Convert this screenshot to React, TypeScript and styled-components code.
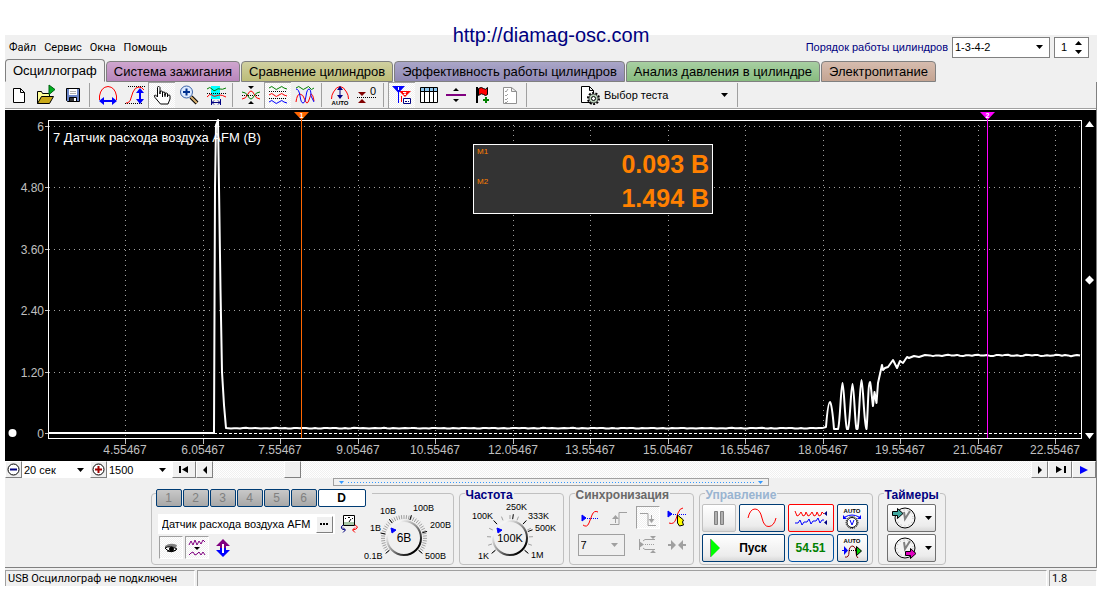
import React from "react";
import styled, { createGlobalStyle, css } from "styled-components";

const Global = createGlobalStyle`
  * { box-sizing: border-box; }
  body { margin: 0; background: #fff; font: 11px/14px "Liberation Sans", Arial, sans-serif; color: #000; }
  button, input, select { font: inherit; color: inherit; margin: 0; border-radius: 0; }
  svg { display: block; flex: none; }
`;

const dither = css`
  background: repeating-conic-gradient(#ffffff 0 25%, #f0f0f0 0 50%) 0 0 / 2px 2px;
`;

const Page = styled.div`
  padding: 0 12px 5px 5px;
`;
const Banner = styled.header`
  height: 35px;
  display: flex;
  justify-content: center;
  align-items: flex-start;
  padding-top: 24px;
`;
const SiteLink = styled.a`
  position: relative;
  z-index: 1;
  font-size: 20px;
  line-height: 23px;
  color: #000080;
  text-decoration: none;
`;
const Window = styled.main`
  background: #f0f0f0;
`;
const MenuBar = styled.nav`
  height: 24px;
  display: flex;
  align-items: center;
  justify-content: space-between;
  padding: 0 8px 0 4px;
`;
const MenuList = styled.div`
  display: flex;
  gap: 8px;
  padding-top: 2px;
`;
const MenuItem = styled.button`
  border: 0;
  background: none;
  padding: 0;
  font: 11px/14px Roboto, sans-serif;
`;
const OrderBar = styled.div`
  display: flex;
  align-items: center;
  gap: 4px;
`;
const OrderLabel = styled.label`
  color: #000080;
`;
const Picker = styled.span<{ $w: number; $h: number; $line?: string; $bg?: string }>`
  display: inline-grid;
  align-items: center;
  width: ${(p) => p.$w}px;
  height: ${(p) => p.$h}px;
  border: ${(p) => (p.$line ? `1px solid ${p.$line}` : "0")};
  background: ${(p) => p.$bg || "#fff"};
  & > select, & > svg { grid-area: 1 / 1; }
  & > select {
    appearance: none;
    border: 0;
    background: none;
    padding: 0 0 0 2px;
    width: 100%;
    color: #000;
    outline: 0;
  }
  & > svg { justify-self: end; margin-right: 6px; pointer-events: none; }
`;
const SpinBox = styled.span`
  display: flex;
  align-items: center;
  width: 35px;
  height: 21px;
  border: 1px solid #808080;
  background: #fff;
  & > input { width: 20px; border: 0; padding: 0 0 0 6px; background: none; outline: 0; }
`;

const TabStrip = styled.div`
  display: flex;
  align-items: flex-end;
  height: 23px;
  gap: 1px;
`;
const Tab = styled.button<{ $tint?: string }>`
  height: ${(p) => (p.$tint ? 21 : 23)}px;
  padding: 0 7px;
  font-size: 13px;
  line-height: 15px;
  border: 1px solid #808080;
  border-bottom-color: ${(p) => (p.$tint ? "#808080" : "#f0f0f0")};
  border-radius: 4px 4px 0 0;
  background: ${(p) => p.$tint || "#f0f0f0"};
  white-space: nowrap;
`;
const Frame = styled.div`
  border: solid #808080;
  border-width: 0 1px 1px 0;
`;
const Toolbar = styled.div`
  display: flex;
  align-items: center;
  height: 27px;
  border-bottom: 1px solid #a0a0a0;
`;
const Tool = styled.button<{ $down?: boolean }>`
  width: 27px;
  height: 26px;
  padding: 0;
  display: grid;
  place-items: center;
  border: 0;
  background: none;
  ${(p) =>
    p.$down &&
    css`
      ${dither};
      box-shadow: inset 1px 1px #a0a0a0;
    `}
`;
const Divider = styled.span`
  width: 8px;
  height: 24px;
  display: block;
  border-left: 3px solid transparent;
  border-right: 4px solid transparent;
  background: #a0a0a0;
  background-clip: padding-box;
`;
const TestPicker = styled.div`
  display: flex;
  align-items: center;
  margin-left: 47px;
`;

const Scope = styled.section`
  position: relative;
  background: #000;
  border-top: 1px solid #fff;
`;
const Plot = styled.svg`
  width: 100%;
  height: auto;
`;
const Readout = styled.div`
  position: absolute;
  left: 42.9%;
  top: 34px;
  width: 240px;
  height: 70px;
  border: 1px solid #fff;
  background: #333;
  color: #ff8000;
  padding: 2px 3px;
  display: flex;
  justify-content: space-between;
`;
const ReadNames = styled.div`
  display: grid;
  grid-auto-rows: 30px;
  font-size: 8px;
  line-height: 10px;
`;
const ReadValues = styled.div`
  font-size: 25px;
  line-height: 34px;
  font-weight: bold;
  text-align: right;
`;

const TimeBar = styled.div`
  display: flex;
  height: 17px;
  background: #f0f0f0;
`;
const Key = styled.button<{ $w: number }>`
  width: ${(p) => p.$w}px;
  height: 17px;
  padding: 0;
  display: grid;
  place-items: center;
  background: #f0f0f0;
  border: 1px solid;
  border-color: #fff #808080 #808080 #fff;
`;
const Track = styled.div`
  flex: 1;
  padding-left: 71px;
  ${dither};
`;
const Splitter = styled.div`
  width: 436px;
  height: 8px;
  margin: 0 auto;
  border: 1px solid #a0a0a0;
  display: flex;
  align-items: center;
  justify-content: space-between;
  padding: 0 5px;
`;
const Dots = styled.span`
  flex: 1;
  margin: 0 4px;
  height: 1px;
  background: repeating-linear-gradient(90deg, #3399ff 0 1px, transparent 1px 3px);
`;
const Panel = styled.div`
  display: flex;
  justify-content: center;
  gap: 5px;
  padding: 7px 5px 2px 0;
`;
const Group = styled.section<{ $w: number }>`
  width: ${(p) => p.$w}px;
  height: 72px;
  border: 1px solid #c0c0c0;
  border-radius: 4px;
`;
const GroupTitle = styled.h2<{ $ink: string }>`
  margin: -6px 0 0 5px;
  padding: 0 1px;
  width: max-content;
  font-size: 12px;
  line-height: 14px;
  background: #f0f0f0;
  color: ${(p) => p.$ink};
`;
const ChannelGroup = styled(Group)`
  display: flex;
  justify-content: space-between;
`;
const ChannelSide = styled.div`
  width: 212px;
  padding-left: 4px;
`;
const Channels = styled.div`
  display: flex;
  gap: 1px;
  width: 216px;
  margin-top: -5px;
  padding-right: 6px;
  background: #f0f0f0;
`;
const Channel = styled.button<{ $on?: boolean }>`
  width: ${(p) => (p.$on ? 48 : 26)}px;
  height: 18px;
  padding: 0;
  border: 1px solid #003c74;
  border-radius: 2px;
  font-size: 12px;
  font-weight: ${(p) => (p.$on ? "bold" : "normal")};
  color: ${(p) => (p.$on ? "#000" : "#808080")};
  background: ${(p) => (p.$on ? "#fff" : "linear-gradient(#c8c8c8, #a8a8a8)")};
`;
const SensorRow = styled.div`
  display: flex;
  align-items: center;
  gap: 5px;
  margin: 7px 0 2px 2px;
`;
const SensorBox = styled.div`
  display: flex;
  align-items: center;
  width: 177px;
  height: 20px;
  background: #fff;
  & > input { width: 158px; padding: 0 0 0 4px; border: 0; background: none; outline: 0; }
`;
const ViewRow = styled.div`
  display: flex;
  gap: 2px;
  margin-left: 3px;
`;
const Toggle = styled.button<{ $down?: boolean }>`
  width: 24px;
  height: 23px;
  padding: 0;
  display: grid;
  place-items: center;
  border: 0;
  background: none;
  ${(p) =>
    p.$down &&
    css`
      ${dither};
      border: 1px solid;
      border-color: #a0a0a0 #fff #fff #a0a0a0;
    `}
`;
const SyncGrid = styled.div`
  display: grid;
  grid-template-columns: repeat(4, 24px);
  column-gap: 5px;
  row-gap: 4px;
  align-items: center;
  padding: 4px 0 0 8px;
`;
const Wide = styled.div`
  grid-column: span 2;
  display: flex;
`;
const RunGrid = styled.div`
  display: grid;
  grid-template-columns: 34px 46px 46px 31px;
  gap: 2px 3px;
  padding: 2px 0 0 2px;
`;
const Push = styled.button<{ $line?: string; $span?: number }>`
  height: 28px;
  padding: 0;
  grid-column: span ${(p) => p.$span || 1};
  display: flex;
  align-items: center;
  justify-content: center;
  border: 1px solid ${(p) => p.$line || "#003c74"};
  border-radius: 2px;
  background: linear-gradient(#ffffff, #ececec 80%, #d8d8d8);
`;
const PushTimer = styled(Push)`
  gap: 8px;
`;
const StartText = styled.strong`
  flex: 1;
  font-size: 12px;
`;
const RateBox = styled.output`
  height: 28px;
  display: grid;
  place-items: center;
  border: 1px solid #0050a0;
  border-radius: 4px;
  font-size: 12px;
  font-weight: bold;
  color: #008000;
`;
const TimerStack = styled.div`
  display: grid;
  gap: 2px;
  padding: 2px 9px 0 8px;
`;
const DialSlot = styled.div<{ $titled?: boolean }>`
  padding-top: ${(p) => (p.$titled ? 0 : 5)}px;
  margin-top: ${(p) => (p.$titled ? -3 : 0)}px;
`;
const StatusBar = styled.footer`
  display: flex;
  gap: 2px;
  height: 18px;
  padding-top: 2px;
  background: #f0f0f0;
`;
const StatusCell = styled.div<{ $w?: number }>`
  ${(p) => (p.$w ? `width: ${p.$w}px;` : "flex: 1;")}
  border: solid #a0a0a0;
  border-width: 1px 0 0 1px;
  border-right: 1px solid #fff;
  padding: 0 2px;
  font: 11px/15px Roboto, sans-serif;
  white-space: nowrap;
`;

const Caret = ({ c = "#000" }: { c?: string }) => (
  <svg width="7" height="4" aria-hidden="true"><path d="M0 0h7L3.500 4z" fill={c} /></svg>
);

type IconProps = { children: React.ReactNode; w?: number; h?: number };
const Icon = ({ children, w = 22, h = 22 }: IconProps) => (
  <svg width={w} height={h} viewBox={`0 0 ${w} ${h}`} fill="none" stroke="#000" strokeWidth="1" aria-hidden="true">
    {children}
  </svg>
);

const icons = {
  file: <Icon><path d="M5.500 4.500h7l4 4v10h-11zM12.500 4.500v4h4" fill="#fff" /></Icon>,
  open: (
    <Icon>
      <path d="M2.500 19.500v-12h4l1 2h7v3" fill="#ffff99" />
      <path d="M2.500 19.500l4-7h12l-4 7z" fill="#c8a818" />
      <path d="M14 1l6 4.500-6 5z" fill="#00b020" stroke="#006010" />
    </Icon>
  ),
  save: (
    <Icon>
      <path d="M4.500 4.500h13v13h-12l-1-1z" fill="#6b86c8" />
      <path d="M7 5h8v6H7z" fill="#fff" stroke="none" />
      <path d="M7.500 13.500h7v4h-7z" fill="#333" />
      <path d="M12 14h2v3h-2z" fill="#fff" stroke="none" />
      <path d="M8 7.500h6M8 9.500h6" stroke="#b0b0b0" />
    </Icon>
  ),
  arch: (
    <Icon>
      <path d="M2.500 16v-4Q4 3 11 2.500 18 3 19.500 12v4" stroke="#f00" />
      <path d="M4 17h14" stroke="#00f" strokeWidth="2" />
      <path d="M2 17l5-4v8zM20 17l-5-4v8z" fill="#00f" stroke="none" />
    </Icon>
  ),
  slope: (
    <Icon>
      <path d="M4 2.500h17M1 19.500h18" strokeDasharray="1 1" />
      <path d="M2 19q4 0 5-5l2-6q2-5 6-5 3 0 5 3" stroke="#f00" />
      <path d="M16 6v12" stroke="#00f" strokeWidth="2" />
      <path d="M16 4l4 5h-8zM16 20l4-5h-8z" fill="#00f" stroke="none" />
    </Icon>
  ),
  hand: (
    <Icon>
      <path d="M6.500 13V3.500q0-1 1-1t1.500 1V10V7.500q1.500-1 2.500 0v3-2q1.500-1 2.500 0v3-2q1.500-1 2.500 0v2q2-1 2.500 0V15l-2 5H9.500L4 13.500Q2.500 11 4.500 11z" fill="#fff" />
      <path d="M11.500 10v3M14 10v3M16.500 11v2" />
    </Icon>
  ),
  zoom: (
    <Icon>
      <path d="M13 13l6 6" stroke="#000" strokeWidth="4" />
      <path d="M13 13l6 6" stroke="#d8b070" strokeWidth="2" />
      <circle cx="8.500" cy="8" r="6" fill="#dceaff" stroke="#3a62a8" />
      <path d="M5 8h7M8.500 4.500v7" stroke="#003090" strokeWidth="2" />
    </Icon>
  ),
  band: (
    <Icon>
      <path d="M6 2h9v13H6z" fill="#00ffff" stroke="none" />
      <path d="M2 5q3-3 5 0t4 1 4-1 6-1" stroke="#008000" />
      <path d="M2 13q3-4 5-2t4 1 4-1 6 2" stroke="#f00" />
      <path d="M2 9.500h19" strokeDasharray="1 1" />
      <path d="M6.500 15v6M15.500 15v6M7 18.500h8M9 16.500l-2 2 2 2M13 16.500l2 2-2 2" stroke="#000080" />
    </Icon>
  ),
  mirror: (
    <Icon>
      <path d="M2 11.500h18" strokeDasharray="1 1" />
      <path d="M2 15q4 0 6-5 3-6 6 0 2 5 6 5" stroke="#f00" />
      <path d="M2 8q4 0 6 4 3 6 6 0 2-4 6-4" stroke="#008000" />
      <path d="M8 2h6l-3 3zM8 20h6l-3-3z" fill="#000" stroke="none" />
    </Icon>
  ),
  waves: (
    <Icon>
      <path d="M2 4q3-3 5 0t5 0 5 0l3 1" stroke="#008000" />
      <path d="M2 7.500h18M2 14.500h18" strokeDasharray="1 1" />
      <path d="M2 11q3-3 5 0t5 0 5 0l3 1" stroke="#f00" />
      <path d="M2 18q3-3 5 0t5 0 5 0l3 1" stroke="#00f" />
    </Icon>
  ),
  overlay: (
    <Icon>
      <path d="M2 4q3-3 5 0t5 0 4 0 4 0" stroke="#008000" />
      <path d="M2 18q1-8 4-8t5 6 4 0 2-6q2 0 3 7" stroke="#f00" />
      <path d="M2 5q3 0 4 7 1 7 3 7t3-7q1-7 3-7t2 7l3 6" stroke="#00f" />
    </Icon>
  ),
  autoY: (
    <Icon>
      <path d="M2.500 15q0-4 2-7 3-5.500 6.500-5.500T17.500 8q2 3 2 7" stroke="#f00" />
      <path d="M11 4v9" stroke="#000080" />
      <path d="M11 2l3 4H8zM11 15l3-4H8z" fill="#000080" stroke="none" />
      <text x="11" y="21" fontSize="6" fontWeight="bold" textAnchor="middle" fill="#000" stroke="none">AUTO</text>
    </Icon>
  ),
  zero: (
    <Icon>
      <path d="M1 13.500h19" strokeDasharray="1 1" />
      <path d="M2 8h8l-4 4zM2 19h8l-4-4z" fill="#800000" stroke="none" />
      <text x="14" y="11" fontSize="11" fill="#000" stroke="none">0</text>
    </Icon>
  ),
  markers: (
    <Icon>
      <path d="M8 7h12l-6 6z" fill="#f00" stroke="none" />
      <path d="M1 2h13L7.500 9z" fill="#00f" stroke="none" />
      <path d="M7.500 8v11" stroke="#00f" /><path d="M10.500 12v6" stroke="#f00" />
      <path d="M7.500 3v3M12 8.500h3l-2 2h2" stroke="#fff" />
      <path d="M12.500 14.500h7v5h-7z" fill="#fff" stroke="#000080" />
      <path d="M14 17.500h2M17 17.500h1" stroke="#000080" />
    </Icon>
  ),
  table: (
    <Icon>
      <path d="M2.500 3.500h17v15h-17z" fill="#fff" />
      <path d="M3 4h16v3H3z" fill="#90c8f0" stroke="none" />
      <path d="M2.500 7.500h17M6.500 4v14M11.500 4v14M15.500 4v14" />
    </Icon>
  ),
  split: (
    <Icon>
      <path d="M1 11h20" stroke="#800080" strokeWidth="2" />
      <path d="M8 7h6l-3-3zM8 15h6l-3 3z" fill="#000" stroke="none" />
    </Icon>
  ),
  flag: (
    <Icon>
      <path d="M5 3v16" strokeWidth="2" />
      <path d="M6.500 4.500q3-2 5 0t4-1v7q-2 2-4 0t-5 1z" fill="#f00" />
      <path d="M11 16h6M14 13v6" stroke="#008000" strokeWidth="2" />
    </Icon>
  ),
  checklist: (
    <Icon>
      <path d="M4.500 3.500h8l5 4v12h-13zM12.500 3.500v4h5" fill="#fff" stroke="#909090" />
      <path d="M6 7l1 1 2-3M6 11l1 1 2-2M6 15l1 1 2-2M6 18l1 1 2-2" stroke="#a0a0a0" />
    </Icon>
  ),
};

const FirstKey = () => <svg width="11" height="7"><path d="M0 0h2v7H0zM9 0v7L3 3.500z" /></svg>;
const LastKey = () => <svg width="11" height="7"><path d="M9 0h2v7H9zM1 0v7l6-3.500z" /></svg>;
const Arrow = ({ left, c = "#000", big }: { left?: boolean; c?: string; big?: boolean }) => (
  <svg width={big ? 8 : 4} height="8" viewBox="0 0 8 8" preserveAspectRatio="none">
    <path d={left ? "M8 0v8L0 4z" : "M0 0v8l8-4z"} fill={c} />
  </svg>
);
const RoundSign = ({ plus }: { plus?: boolean }) => (
  <svg width="13" height="13" fill="none" stroke={plus ? "#a00000" : "#000080"}>
    <circle cx="6.500" cy="6.500" r="5.500" stroke="#000" fill="#fff" />
    <path d={plus ? "M3 6.500h7M6.500 3v7" : "M3 6.500h7"} strokeWidth="2" />
  </svg>
);
const GripMark = () => <svg width="5" height="3"><path d="M0 0h5L2.500 3z" fill="#39f" /></svg>;

const gridX = [125, 203, 280, 358, 435, 513, 590, 668, 745, 823, 900, 978, 1055];
const gridY: [number, string][] = [[126, "6"], [187, "4.80"], [249, "3.60"], [310, "2.40"], [372, "1.20"], [433, "0"]];
const ripple = (from: number, to: number, y: number, amp: number) => {
  let d = "";
  for (let x = from, i = 0; x <= to; x += 3, i++) {
    d += `L${x} ${(y + (Math.sin(i * 1.9) * 0.6 + Math.sin(i * 0.7) * 0.4) * amp).toFixed(1)}`;
  }
  return d;
};
const trace =
  "M48 433H214L215 187L216 125L218 120L219 187L220.500 290L222 372L224 405L226 428" +
  ripple(228, 824, 428.2, 0.4) +
  "L826 427Q828 402 830 402Q832 404 834 429L838 429C840 425 841 383 842.500 383C844 383 845 425 847 429L848 429" +
  "C850 425 851 384 852.500 384C854 384 855 425 856.500 429L857.500 429C859 425 860 380 861.500 380C863 380 864 425 866.500 429" +
  "C868 415 868 382 870 382C871 384 872 400 873 406L874.500 392L876.500 403L878 383L880 374L882 365L883 370L885 368L888 367L893 360L897 368L900 361L903 363L907 357L909 358L914 356L919 357L925 355" +
  ripple(930, 1080, 355.4, 0.8);

function ScopePlot() {
  return (
    <Plot viewBox="5 110 1091 351" role="img" aria-label="Датчик расхода воздуха">
      <g fill="none" shapeRendering="crispEdges">
        {gridX.map((x) => (
          <g key={x}>
            <path d={`M${x + 0.5} 125V438`} stroke="#a0a0a0" strokeDasharray="1 4" />
            <path d={`M${x + 0.5} 439v5`} stroke="#c0c0c0" />
          </g>
        ))}
        {gridY.map(([y]) => (
          <g key={y}>
            <path d={`M49 ${y + 0.5}H1081`} stroke={y === 433 ? "#fff" : "#a0a0a0"} strokeDasharray={y === 433 ? "3 2" : "1 4"} />
            <path d={`M45 ${y + 0.5}h4`} stroke="#c0c0c0" />
          </g>
        ))}
        <path d="M48.500 120.500H1081.500V438.500H48.500z" stroke="#fff" />
      </g>
      <g fill="#c0c0c0" fontSize="12">
        {gridY.map(([y, t]) => <text key={t} x="44" y={y + 5} textAnchor="end">{t}</text>)}
        {gridX.map((x, i) => <text key={x} x={x} y="454" textAnchor="middle">{(4.55467 + i * 1.5).toFixed(5)}</text>)}
      </g>
      <text x="53" y="142" fontSize="13" fill="#fff">7 Датчик расхода воздуха AFM (В)</text>
      <path d={trace} fill="none" stroke="#fff" strokeWidth="2" strokeLinejoin="round" />
      <g fill="none" shapeRendering="crispEdges">
        <path d="M301.500 118V438" stroke="#ff6600" />
        <path d="M987.500 118V438" stroke="#ff00ff" />
      </g>
      <path d="M294 112h15l-7.500 8z" fill="#ff6600" />
      <path d="M980 112h15l-7.500 8z" fill="#ff00ff" />
      <g fill="#fff" fontSize="7" fontWeight="bold" textAnchor="middle">
        <text x="301.500" y="118">1</text>
        <text x="987.500" y="118">2</text>
      </g>
      <path d="M1085 127h9l-4.500-6zM1085 433h9l-4.500 6zM1085 280l4.500-4.500L1094 280l-4.500 4.500z" fill="#fff" />
      <circle cx="12.500" cy="433" r="4" fill="#fff" />
    </Plot>
  );
}

type DialProps = {
  w: number; cx: number; value: string; size: number; ticks: number; label: string;
  marks: { t: string; x: number; y: number; a: number }[];
};
function Dial({ w, cx, value, size, ticks, marks, label }: DialProps) {
  const cy = 39;
  const ray = (deg: number, r1: number, r2: number) => {
    const r = (deg * Math.PI) / 180;
    return `M${cx + Math.sin(r) * r1} ${cy - Math.cos(r) * r1}L${cx + Math.sin(r) * r2} ${cy - Math.cos(r) * r2}`;
  };
  const minor = Array.from({ length: ticks + 1 }, (_, i) => ray(-130 + (260 / ticks) * i, 19, 23)).join("");
  return (
    <svg width={w} height="64" role="img" aria-label={label}>
      <defs>
        <linearGradient id={`rim${ticks}`} x1="0" y1="0" x2="1" y2="1">
          <stop offset="0.2" stopColor="#f4f4f4" />
          <stop offset="0.5" stopColor="#909090" />
          <stop offset="0.85" stopColor="#000" />
        </linearGradient>
      </defs>
      <path d={minor} stroke="#a0a0a0" />
      <path d={marks.map((m) => ray(m.a, 19, 24)).join("")} stroke="#000" />
      <circle cx={cx} cy={cy} r="17" fill="#f0f0f0" stroke={`url(#rim${ticks})`} strokeWidth="2" />
      <path d={`M${cx - 13} ${cy - 10}l5 2-4 3z`} fill="#00f" stroke="#00f" />
      <text x={cx} y={cy + 4} fontSize={size} textAnchor="middle">{value}</text>
      <g fontSize="9">{marks.map((m) => <text key={m.t} x={m.x} y={m.y}>{m.t}</text>)}</g>
    </svg>
  );
}

const Clock = ({ out }: { out?: boolean }) => (
  <Icon w={26} h={24}>
    <circle cx="14" cy="12" r="10" fill="#f4f4f4" />
    <circle cx="14" cy="12" r="8" stroke="#b0b0b0" strokeDasharray="1 3" />
    <path d="M13 6l1 7 5-8" stroke="#808080" strokeWidth="2" />
    {out ? <path d="M14.500 15.500h5v-3l5.500 5-5.500 5v-3h-5z" fill="#e000c0" /> : <path d="M1.500 5.500h5v-3l5.500 5-5.500 5v-3h-5z" fill="#40a8a0" />}
  </Icon>
);

const tabs: [string, string?][] = [
  ["Осциллограф"],
  ["Система зажигания", "linear-gradient(#cfa6cf, #b886bb)"],
  ["Сравнение цилиндров", "linear-gradient(#d0d0a0, #bcbc78)"],
  ["Эффективность работы цилиндров", "linear-gradient(#aaa6c8, #9089b4)"],
  ["Анализ давления в цилиндре", "linear-gradient(#a8cfa2, #88bc80)"],
  ["Электропитание", "linear-gradient(#d6bcae, #c4a492)"],
];

export default function App() {
  return (
    <>
      <Global />
      <Page>
        <Banner><SiteLink href="http://diamag-osc.com">http://diamag-osc.com</SiteLink></Banner>
        <Window>
          <MenuBar>
            <MenuList>{["Файл", "Сервис", "Окна", "Помощь"].map((m) => <MenuItem key={m}>{m}</MenuItem>)}</MenuList>
            <OrderBar>
              <OrderLabel htmlFor="order">Порядок работы цилиндров</OrderLabel>
              <Picker $w={98} $h={21} $line="#808080">
                <select id="order" defaultValue="1-3-4-2"><option>1-3-4-2</option></select>
                <Caret />
              </Picker>
              <SpinBox>
                <input aria-label="Цилиндр" defaultValue="1" />
                <svg width="7" height="13"><path d="M0 4h7L3.500 0zM0 9h7l-3.500 4z" /></svg>
              </SpinBox>
            </OrderBar>
          </MenuBar>
          <TabStrip role="tablist">
            {tabs.map(([name, tint]) => <Tab key={name} role="tab" aria-selected={!tint} $tint={tint}>{name}</Tab>)}
          </TabStrip>
          <Frame>
            <Toolbar role="toolbar">
              <Tool aria-label="Новый">{icons.file}</Tool>
              <Tool aria-label="Открыть">{icons.open}</Tool>
              <Tool aria-label="Сохранить">{icons.save}</Tool>
              <Divider />
              <Tool aria-label="Период">{icons.arch}</Tool>
              <Tool aria-label="Амплитуда">{icons.slope}</Tool>
              <Tool aria-label="Перемещение" $down>{icons.hand}</Tool>
              <Tool aria-label="Масштаб">{icons.zoom}</Tool>
              <Tool aria-label="Участок">{icons.band}</Tool>
              <Divider />
              <Tool aria-label="Инверсия">{icons.mirror}</Tool>
              <Tool aria-label="Раздельно" $down>{icons.waves}</Tool>
              <Tool aria-label="Наложение">{icons.overlay}</Tool>
              <Divider />
              <Tool aria-label="Авто">{icons.autoY}</Tool>
              <Tool aria-label="Ноль">{icons.zero}</Tool>
              <Divider />
              <Tool aria-label="Маркеры" $down>{icons.markers}</Tool>
              <Tool aria-label="Таблица">{icons.table}</Tool>
              <Tool aria-label="Разделить">{icons.split}</Tool>
              <Tool aria-label="Флаг">{icons.flag}</Tool>
              <Tool aria-label="Список">{icons.checklist}</Tool>
              <Divider />
              <TestPicker>
                <Icon w={24} h={22}>
                  <path d="M3.500 2.500h8l4 4v12h-12zM11.500 2.500v4h4" fill="#fff" />
                  <circle cx="15.500" cy="14.500" r="5.500" stroke="#000" strokeWidth="2" strokeDasharray="2 1.400" />
                  <circle cx="15.500" cy="14.500" r="4.500" fill="#b8d0b8" stroke="#404040" />
                  <circle cx="15.500" cy="14.500" r="2" fill="#fff" />
                </Icon>
                <Picker $w={132} $h={20} $bg="transparent">
                  <select aria-label="Выбор теста"><option>Выбор теста</option></select>
                  <Caret />
                </Picker>
              </TestPicker>
              <Divider />
            </Toolbar>
            <Scope>
              <ScopePlot />
              <Readout>
                <ReadNames><span>M1</span><span>M2</span></ReadNames>
                <ReadValues><div>0.093 В</div><div>1.494 В</div></ReadValues>
              </Readout>
            </Scope>
            <TimeBar>
              <Key $w={17} aria-label="Уменьшить"><RoundSign /></Key>
              <Picker $w={68} $h={17}>
                <select aria-label="Развёртка"><option>20 сек</option></select><Caret />
              </Picker>
              <Key $w={17} aria-label="Увеличить"><RoundSign plus /></Key>
              <Picker $w={65} $h={17}>
                <select aria-label="Точек"><option>1500</option></select><Caret />
              </Picker>
              <Key $w={24} aria-label="В начало"><FirstKey /></Key>
              <Key $w={17} aria-label="Назад"><Arrow left /></Key>
              <Track><Key $w={17} aria-label="Прокрутка" /></Track>
              <Key $w={17} aria-label="Вперёд"><Arrow /></Key>
              <Key $w={24} aria-label="В конец"><LastKey /></Key>
              <Key $w={24} aria-label="Воспроизвести"><Arrow big c="#00f" /></Key>
            </TimeBar>
            <Splitter><GripMark /><Dots /><GripMark /></Splitter>
            <Panel>
              <ChannelGroup $w={303} aria-label="Каналы">
                <ChannelSide>
                  <Channels>
                    {[1, 2, 3, 4, 5, 6].map((n) => <Channel key={n}>{n}</Channel>)}
                    <Channel $on>D</Channel>
                  </Channels>
                  <SensorRow>
                    <SensorBox>
                      <input aria-label="Датчик" defaultValue="Датчик расхода воздуха AFM" />
                      <Key $w={17} aria-label="Выбрать датчик"><svg width="8" height="2"><path d="M0 0h2v2H0zM3 0h2v2H3zM6 0h2v2H6z" /></svg></Key>
                    </SensorBox>
                    <Icon w={18} h={20}>
                      <path d="M3.500 1.500h11v10h-11z" fill="#fff" />
                      <path d="M4 8h10v3H4z" fill="#a8c8a8" stroke="none" />
                      <path d="M5 5l1-1M8 3.500h2M12 4l1 1M9 8l2-3" />
                      <path d="M3 11q-3 2-1 4l3 1M3 13.500L5.500 16 3 18.500" stroke="#000080" />
                      <path d="M15 11q4 2 1 4l-3 1M15 13.500L12.500 16l2.500 2.500" stroke="#f00" />
                    </Icon>
                  </SensorRow>
                  <ViewRow>
                    <Toggle $down aria-label="Показать">
                      <Icon w={14} h={12}>
                        <path d="M1 4q5-4 12-1l-1 3q-5-3-11 0z" fill="#808080" stroke="none" />
                        <path d="M1 6q5-3 12 1-4 4-10 1z" fill="#fff" />
                        <circle cx="7.500" cy="7" r="2" fill="#000" /><path d="M3 9q5 2 9-1" />
                      </Icon>
                    </Toggle>
                    <Toggle $down aria-label="Фильтр">
                      <Icon w={18} h={18}>
                        <path d="M1 6l2-4 2 4 2-5 2 5 2-4 2 3 2-4 2 2" stroke="#800080" />
                        <path d="M6 8h6l-3 3z" fill="#000" stroke="none" />
                        <path d="M1 16l2-2 2-1 2 3 2-1 2-2 2 3 2-3 2 3" stroke="#800080" />
                      </Icon>
                    </Toggle>
                    <Toggle aria-label="Смещение">
                      <Icon w={14} h={18}>
                        <path d="M7 0l7 7h-4v2H4V7H0z" fill="#800080" stroke="none" />
                        <path d="M7 18l7-7h-4V9H4v2H0z" fill="#00f" stroke="none" />
                        <path d="M7 5v9" stroke="#fff" strokeWidth="2" />
                      </Icon>
                    </Toggle>
                  </ViewRow>
                </ChannelSide>
                <DialSlot $titled={false}>
                  <Dial w={90} cx={40} value="6В" size={12} ticks={40} label="Диапазон"
                    marks={[
                      { t: "0.1В", x: 0, y: 60, a: -130 }, { t: "1В", x: 6, y: 32, a: -78 }, { t: "10В", x: 16, y: 15, a: -38 },
                      { t: "100В", x: 49, y: 12, a: 18 }, { t: "200В", x: 66, y: 29, a: 74 }, { t: "500В", x: 61, y: 60, a: 130 },
                    ]} />
                </DialSlot>
              </ChannelGroup>
              <Group $w={105}>
                <GroupTitle $ink="#000080">Частота</GroupTitle>
                <DialSlot $titled>
                  <Dial w={103} cx={50} value="100K" size={11} ticks={12} label="Частота"
                    marks={[
                      { t: "1K", x: 18, y: 60, a: -130 }, { t: "100K", x: 12, y: 20, a: -43 }, { t: "250K", x: 46, y: 11, a: 8 },
                      { t: "333K", x: 68, y: 20, a: 43 }, { t: "500K", x: 75, y: 32, a: 70 }, { t: "1M", x: 71, y: 59, a: 130 },
                    ]} />
                </DialSlot>
              </Group>
              <Group $w={125}>
                <GroupTitle $ink="#696969">Синхронизация</GroupTitle>
                <SyncGrid>
                  <Toggle aria-label="Уровень"><Icon w={20} h={20}><path d="M2 7l4 3-4 3z" fill="#00f" stroke="#00f" /><path d="M7 10.500h11" stroke="#00f" strokeDasharray="1 1" /><path d="M3 17q4 3 6-2l3-8q2-5 6-3" stroke="#f00" /></Icon></Toggle>
                  <Toggle aria-label="Фронт"><Icon w={20} h={20}><path d="M1 16.500h9v-12h8M6.500 15V8" stroke="#a0a0a0" /><path d="M3 11l3.500-4 3.500 4z" fill="#a0a0a0" stroke="none" /></Icon></Toggle>
                  <Toggle $down aria-label="Спад"><Icon w={20} h={20}><path d="M2 5.500h8v12h8M13.500 7v6" stroke="#a0a0a0" /><path d="M10.500 11h6l-3 4z" fill="#a0a0a0" stroke="none" /></Icon></Toggle>
                  <Toggle aria-label="Захват"><Icon w={20} h={22}><path d="M1 4l4 3-4 3z" fill="#00f" stroke="#00f" /><path d="M6 7.500h13" stroke="#00f" strokeDasharray="1 1" /><path d="M2 16q5 2 7-4l2-6q2-5 5-5" stroke="#f00" /><path d="M10.500 8v8l2 3 4-1-1-3 1-2z" fill="#ff0" /></Icon></Toggle>
                  <Wide>
                    <Picker $w={47} $h={22} $line="#a0a0a0" $bg="#f0f0f0">
                      <select aria-label="Канал синхронизации"><option>7</option></select><Caret c="#a0a0a0" />
                    </Picker>
                  </Wide>
                  <Toggle aria-label="Границы"><Icon w={20} h={20}><path d="M1 6l5 3.500L1 13zM12 1h6l-3 3zM12 18h6l-3-3z" fill="#a0a0a0" stroke="none" /><path d="M1.500 4v11M5 6l2-1.500h10M5 13l2 1.500h10" stroke="#a0a0a0" /><path d="M7 9.500h9" stroke="#a0a0a0" strokeDasharray="1 1" /></Icon></Toggle>
                  <Toggle aria-label="Сжать"><Icon w={20} h={12}><path d="M1 6h4M15 6h4" stroke="#a0a0a0" strokeWidth="2" /><path d="M4 1l5 5-5 5zM16 1l-5 5 5 5z" fill="#a0a0a0" stroke="none" /></Icon></Toggle>
                </SyncGrid>
              </Group>
              <Group $w={174}>
                <GroupTitle $ink="#99b4d1">Управление</GroupTitle>
                <RunGrid>
                  <Push $line="#c0c0c0" aria-label="Пауза"><Icon w={12} h={16}><path d="M1.500 1.500h3v13h-3zM7.500 1.500h3v13h-3z" fill="#b0b0b0" stroke="#808080" /></Icon></Push>
                  <Push aria-label="Синус"><Icon w={30} h={20}><path d="M1 10Q3 1 8 1T15 10 22 18.500 29 10" stroke="#f00" /></Icon></Push>
                  <Push $line="#f00" aria-label="Сравнить">
                    <Icon w={34} h={18}>
                      <path d="M1 2l2 5 2-1 2-3 2 4 2-1 1-3 2 4 2-1 2-3 2 4 2-1 1-3 2 4 2-1 1-3 2 2" stroke="#f00" />
                      <path d="M1 14h3l2-3 2 5 2-3h3l2-3 2 5 2-3h3l2-3 2 5 2-3h2" stroke="#00f" />
                      <path d="M33 2v5l-3-2.500zM33 11v5l-3-2.500z" fill="#000080" stroke="none" />
                    </Icon>
                  </Push>
                  <Push aria-label="Авто вольтметр">
                    <Icon w={22} h={24}>
                      <text x="11" y="7" fontSize="6" fontWeight="bold" textAnchor="middle" fill="#000" stroke="none">AUTO</text>
                      <path d="M4 11q7-4 14 0" stroke="#00f" /><path d="M2 9v4h4zM20 9v4h-4z" fill="#00f" stroke="none" />
                      <circle cx="11" cy="16.500" r="6" strokeDasharray="1 1" /><circle cx="11" cy="16.500" r="5" fill="#fff" />
                      <path d="M9 14l2 5 2-5" stroke="#00f" />
                    </Icon>
                  </Push>
                  <Push $span={2}>
                    <Icon w={20} h={20}><path d="M8 1v18l9-9z" fill="#0f0" stroke="none" /><path d="M7.500 1v18" stroke="#808080" /></Icon>
                    <StartText>Пуск</StartText>
                  </Push>
                  <RateBox>54.51</RateBox>
                  <Push aria-label="Авто пуск">
                    <Icon w={22} h={24}>
                      <text x="11" y="7" fontSize="6" fontWeight="bold" textAnchor="middle" fill="#000" stroke="none">AUTO</text>
                      <path d="M1 14.500h3" stroke="#00f" /><path d="M3 10v9l4-4.500z" fill="#00f" stroke="none" />
                      <path d="M4 21q4 1 4-5t4-6q3 1 3 6t2 6" stroke="#800000" /><path d="M8 14.500h7" strokeDasharray="1 1" />
                      <path d="M15.500 10.500v9l5-4.500z" fill="#0c0" />
                    </Icon>
                  </Push>
                </RunGrid>
              </Group>
              <Group $w={68}>
                <GroupTitle $ink="#000080">Таймеры</GroupTitle>
                <TimerStack>
                  <PushTimer $line="#707070" aria-label="Таймер запуска"><Clock /><Caret /></PushTimer>
                  <PushTimer $line="#707070" aria-label="Таймер остановки"><Clock out /><Caret /></PushTimer>
                </TimerStack>
              </Group>
            </Panel>
          </Frame>
          <StatusBar>
            <StatusCell $w={190}>USB Осциллограф не подключен</StatusCell>
            <StatusCell />
            <StatusCell $w={48}>1.8</StatusCell>
          </StatusBar>
        </Window>
      </Page>
    </>
  );
}
